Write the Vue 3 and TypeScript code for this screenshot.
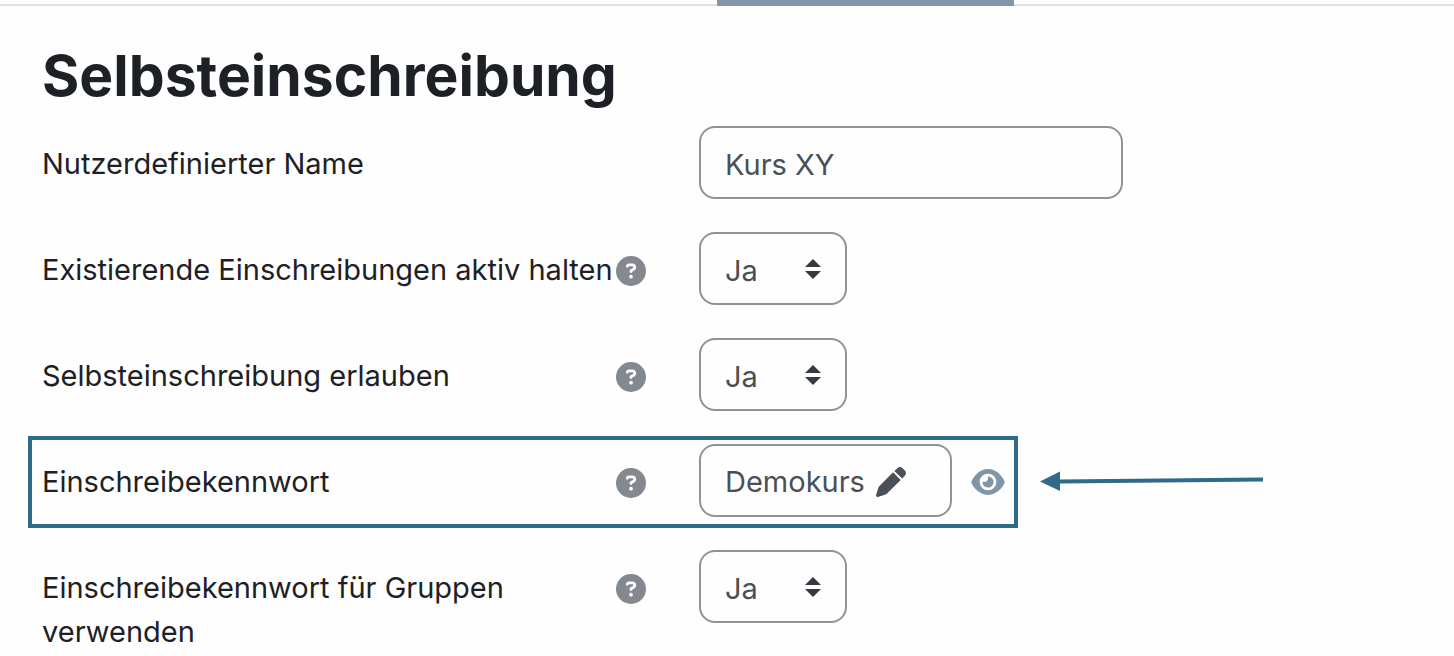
<script setup lang="ts">
import { ref } from 'vue'

interface Setting {
  id: string
  label: string
  kind: 'text' | 'select' | 'password'
  help: boolean
}

const settings: Setting[] = [
  { id: 'name', label: 'Nutzerdefinierter Name', kind: 'text', help: false },
  { id: 'keep-active', label: 'Existierende Einschreibungen aktiv halten', kind: 'select', help: true },
  { id: 'allow-self', label: 'Selbsteinschreibung erlauben', kind: 'select', help: true },
  { id: 'password', label: 'Einschreibekennwort', kind: 'password', help: true },
  { id: 'group-key', label: 'Einschreibekennwort für Gruppen verwenden', kind: 'select', help: true },
]

const values = ref<Record<string, string>>({
  name: 'Kurs XY',
  'keep-active': 'Ja',
  'allow-self': 'Ja',
  password: 'Demokurs',
  'group-key': 'Ja',
})
</script>

<template>
  <div class="page">
    <div class="tabs"><span class="active-tab"></span></div>
    <main class="content">
      <h1>Selbsteinschreibung</h1>
      <form class="settings" @submit.prevent>
        <div v-for="s in settings" :key="s.id" class="row" :class="{ marked: s.kind === 'password' }">
          <div class="label-cell">
            <label :for="s.id">{{ s.label }}</label>
            <button v-if="s.help" type="button" class="icon-button help" :aria-label="'Hilfe zu ' + s.label">
              <svg viewBox="0 0 512 512" width="30" height="30" aria-hidden="true">
                <path d="M256 512A256 256 0 1 0 256 0a256 256 0 1 0 0 512zM169.800 165.300c7.900-22.300 29.100-37.300 52.800-37.300h58.300c34.900 0 63.100 28.300 63.100 63.100c0 22.600-12.100 43.500-31.700 54.800L280 264.400c-.2 13-10.900 23.600-24 23.600c-13.300 0-24-10.700-24-24V250.500c0-8.600 4.600-16.500 12.100-20.800l44.300-25.400c4.700-2.700 7.600-7.700 7.600-13.100c0-8.400-6.800-15.100-15.100-15.100H222.600c-3.400 0-6.400 2.100-7.500 5.300l-.4 1.200c-4.400 12.500-18.200 19-30.600 14.600s-19-18.200-14.600-30.600l.4-1.200zM224 352a32 32 0 1 1 64 0 32 32 0 1 1 -64 0z" />
              </svg>
            </button>
          </div>

          <div class="field-cell">
            <input v-if="s.kind === 'text'" :id="s.id" v-model="values[s.id]" class="control text" type="text" />

            <div v-else-if="s.kind === 'select'" class="select-wrap">
              <select :id="s.id" v-model="values[s.id]" class="control select">
                <option>Ja</option>
                <option>Nein</option>
              </select>
              <svg class="caret" viewBox="0 0 16 20" width="16" height="20" aria-hidden="true">
                <path d="M8 0L16 8H0zM0 12H16L8 20z" />
              </svg>
            </div>

            <template v-else>
              <button :id="s.id" type="button" class="control password">
                <span>{{ values[s.id] }}</span>
                <svg viewBox="0 0 512 512" width="30" height="30" aria-hidden="true">
                  <path d="M362.700 19.300L314.300 67.700 444.300 197.700l48.400-48.400c25-25 25-65.500 0-90.500L453.300 19.300c-25-25-65.500-25-90.500 0zm-71 71L58.600 323.500c-10.400 10.400-18 23.300-22.200 37.400L1 481.200C-1.500 489.700 .8 498.800 7 505s15.300 8.500 23.700 6.100l120.300-35.400c14.100-4.200 27-11.800 37.400-22.200L421.700 220.300 291.700 90.300z" />
                </svg>
              </button>
              <button type="button" class="icon-button reveal" aria-label="Kennwort anzeigen">
                <svg viewBox="0 32 576 448" width="34" height="26" aria-hidden="true">
                  <path d="M288 32c-80.800 0-145.500 36.800-192.600 80.600C48.600 156 17.300 208 2.500 243.700c-3.300 7.900-3.300 16.700 0 24.600C17.300 304 48.600 356 95.400 399.400C142.500 443.200 207.200 480 288 480s145.500-36.800 192.600-80.600c46.800-43.500 78.100-95.400 93-131.100c3.300-7.900 3.300-16.700 0-24.600c-14.900-35.700-46.200-87.700-93-131.100C433.500 68.800 368.800 32 288 32zM144 256a144 144 0 1 1 288 0 144 144 0 1 1 -288 0zm144-64c0 35.300-28.700 64-64 64c-7.100 0-13.900-1.200-20.300-3.300c-5.500-1.800-11.900 1.600-11.700 7.400c.3 6.900 1.300 13.800 3.200 20.700c13.700 51.200 66.400 81.600 117.600 67.900s81.600-66.400 67.900-117.600c-11.100-41.500-47.800-69.400-88.600-71.100c-5.800-.2-9.200 6.100-7.400 11.700c2.100 6.400 3.300 13.200 3.300 20.300z" />
                </svg>
              </button>
              <svg class="arrow" viewBox="0 0 223 20" width="223" height="20" aria-hidden="true">
                <path d="M0 10.500L20 .5V20z" />
                <path d="M19 8.500L223 6.500V10.500L19 12.500z" />
              </svg>
            </template>
          </div>
        </div>
      </form>
    </main>
  </div>
</template>

<style>
body {
  margin: 0;
  background: #fefefe;
}
</style>

<style scoped>
.page {
  font-family: Inter, "Liberation Sans", sans-serif;
  font-size: 29px;
  line-height: 44px;
  color: #1d2125;
}

.tabs {
  height: 4px;
  padding-left: 717px;
  border-bottom: 2px solid #dee2e2;
}

.active-tab {
  display: block;
  width: 297px;
  height: 6px;
  background: #8196a8;
}

.content {
  padding: 34px 42px 0;
}

h1 {
  margin: 0 0 14px;
  font-size: 57px;
  font-weight: 700;
  line-height: 72px;
}

.settings {
  display: flex;
  flex-direction: column;
  gap: 33px;
}

.row {
  position: relative;
  display: grid;
  grid-template-columns: minmax(0, 604px) minmax(0, 1fr);
  column-gap: 53px;
  align-items: start;
}

.row.marked::before {
  content: "";
  position: absolute;
  box-sizing: border-box;
  top: -8px;
  bottom: -11px;
  left: -14px;
  width: 990px;
  border: 4px solid #2f6b88;
  pointer-events: none;
}

.label-cell {
  display: flex;
  align-items: flex-start;
  justify-content: space-between;
  padding-top: 16px;
}

.icon-button {
  display: block;
  flex: none;
  padding: 0;
  border: 0;
  background: none;
  cursor: pointer;
}

.icon-button svg {
  display: block;
}

.help {
  padding-top: 8px;
  fill: #83898f;
}

.field-cell {
  display: flex;
  align-items: center;
}

.control {
  box-sizing: border-box;
  height: 73px;
  margin: 0;
  padding: 4px 24px 0;
  border: 2px solid #8f9396;
  border-radius: 16px;
  background: #fefefe;
  color: #495057;
  font: inherit;
}

.text {
  width: 424px;
}

.select-wrap {
  position: relative;
}

.select {
  display: block;
  width: 148px;
  appearance: none;
}

.caret {
  position: absolute;
  top: 27px;
  right: 26px;
  fill: #343a40;
  pointer-events: none;
}

.password {
  display: flex;
  align-items: center;
  justify-content: space-between;
  width: 253px;
  padding-top: 2px;
  padding-right: 44px;
  fill: #495057;
}

.reveal {
  margin-left: 19px;
  padding-top: 2px;
  fill: #8196a8;
}

.arrow {
  flex: none;
  margin-left: 35px;
  fill: #2f6b88;
}
</style>
